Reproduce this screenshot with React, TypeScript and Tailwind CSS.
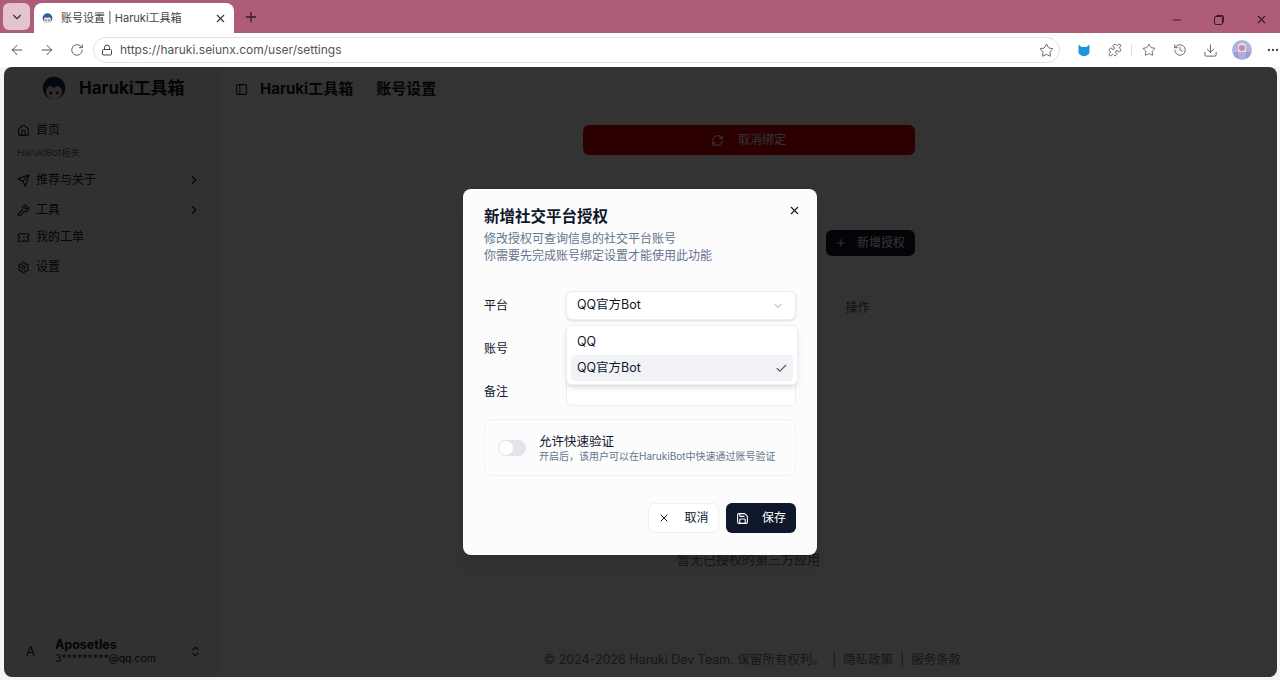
import React from "react";
import { ArrowLeft, ArrowRight, RotateCw, Lock, Star, Puzzle, History, Download, MoreHorizontal, X, Plus, Minus, ChevronDown, ChevronRight, ChevronsUpDown, Home, Send, Wrench, Ticket, Settings, PanelLeft, Check, Save, RefreshCw } from "lucide-react";

const font = "font-['Inter','Noto_Sans_CJK_SC',sans-serif]";

function Face({ size, dark }: { size: number; dark?: boolean }) {
  return (
    <svg width={size} height={size} viewBox="0 0 32 32" className="shrink-0">
      <circle cx="16" cy="15" r="12" fill={dark ? "#1b2a4a" : "#2f5f9e"} />
      <ellipse cx="16" cy="19" rx="8.5" ry="8" fill="#f3dfd6" />
      <path d="M6 16C7 7 25 7 26 16C22 12 19 12 16 15C13 12 10 12 6 16Z" fill={dark ? "#1b2a4a" : "#2f5f9e"} />
      <circle cx="12.5" cy="20" r="1.6" fill="#1b2a4a" />
      <circle cx="19.5" cy="20" r="1.6" fill="#1b2a4a" />
    </svg>
  );
}

function BrowserTop() {
  return (
    <>
      <div className="flex h-[33px] shrink-0 items-end bg-[#ae5c7a] pl-[3px]">
        <div className="mb-[3px] flex h-[27px] w-[27px] items-center justify-center rounded-md bg-[#e3c3d0]">
          <ChevronDown size={14} color="#333" />
        </div>
        <div className="ml-[4px] flex h-[30px] w-[200px] items-center rounded-t-lg bg-white pl-[7px] pr-[7px]">
          <Face size={13} />
          <span className="ml-[7px] flex-1 text-[11px] text-[#444]">账号设置 | Haruki工具箱</span>
          <X size={13} color="#333" />
        </div>
        <Plus size={16} color="#3a1b28" className="mb-[8px] ml-[9px]" />
        <div className="mb-[7px] ml-auto flex items-center">
          <Minus size={12} color="#3a1b28" className="mr-[31px]" />
          <svg width="10" height="10" viewBox="0 0 10 10" className="mr-[31px]" fill="none" stroke="#3a1b28">
            <rect x="0.5" y="1.5" width="8" height="8" rx="1.5" />
            <path d="M2.5 0.5H8A1.5 1.5 0 0 1 9.5 2V7.5" />
          </svg>
          <X size={13} color="#3a1b28" className="mr-[12px]" />
        </div>
      </div>
      <div className="flex h-[34px] shrink-0 items-center bg-white">
        <ArrowLeft size={16} color="#444" strokeWidth={1.4} className="ml-[9px]" />
        <ArrowRight size={16} color="#444" strokeWidth={1.4} className="ml-[14px]" />
        <RotateCw size={14} color="#444" strokeWidth={1.4} className="ml-[15px]" />
        <div className="ml-[9px] flex h-[26px] w-[968px] items-center rounded-full border border-[#e2e2e2] bg-white pl-[7px] pr-[5px]">
          <Lock size={12} color="#444" />
          <span className="ml-[7px] flex-1 text-[12px] text-[#555]">https://haruki.seiunx.com/user/settings</span>
          <Star size={15} color="#444" strokeWidth={1.3} />
        </div>
        <svg width="14" height="14" viewBox="0 0 14 14" className="ml-[17px]">
          <path d="M1.5 1.5L4.5 4H9.500L12.5 1.500V9C12.500 11 10 13 7 13C4 13 1.500 11 1.500 9Z" fill="#1c97dc" />
        </svg>
        <Puzzle size={14} color="#444" strokeWidth={1.3} className="ml-[17px]" />
        <div className="ml-[9px] h-[12px] w-px bg-[#ddd]" />
        <Star size={14} color="#444" strokeWidth={1.3} className="ml-[10px]" />
        <History size={14} color="#444" strokeWidth={1.3} className="ml-[17px]" />
        <Download size={15} color="#444" strokeWidth={1.3} className="ml-[16px]" />
        <div className="ml-[14px] flex h-[20px] w-[20px] items-center justify-center overflow-hidden rounded-full bg-[#aeb4dc]">
          <svg width="20" height="20" viewBox="0 0 20 20">
            <rect x="6" y="3" width="8" height="15" rx="4" fill="#e6dde8" />
            <circle cx="10" cy="8" r="3" fill="#c98aa6" />
            <rect x="2" y="12" width="16" height="6" fill="#8b8fd0" opacity="0.6" />
          </svg>
        </div>
        <MoreHorizontal size={14} color="#444" className="ml-[14px]" />
      </div>
    </>
  );
}

function NavRow({ icon, label, chevron, cls }: { icon: React.ReactNode; label: string; chevron?: boolean; cls: string }) {
  return (
    <div className={`flex items-center pl-[13px] pr-[19px] ${cls}`}>
      {icon}
      <span className="ml-[6px] flex-1 text-[12px] text-[#0f172a]">{label}</span>
      {chevron && <ChevronRight size={14} color="#0f172a" />}
    </div>
  );
}

function Sidebar() {
  return (
    <aside className="flex w-[216px] shrink-0 flex-col bg-[#f6f6f6]">
      <div className="flex h-[44px] items-center pl-[35px]">
        <Face size={30} dark />
        <span className="ml-[10px] text-[17px] font-bold text-[#0f172a]">Haruki工具箱</span>
      </div>
      <NavRow icon={<Home size={13} color="#0f172a" />} label="首页" cls="mt-[8px] h-[22px]" />
      <div className="mt-[5px] h-[14px] pl-[13px] text-[9.5px] leading-[14px] text-[#64748b]">HarukiBot相关</div>
      <NavRow icon={<Send size={13} color="#0f172a" />} label="推荐与关于" chevron cls="mt-[9px] h-[22px]" />
      <NavRow icon={<Wrench size={13} color="#0f172a" />} label="工具" chevron cls="mt-[8px] h-[22px]" />
      <NavRow icon={<Ticket size={13} color="#0f172a" />} label="我的工单" cls="mt-[5px] h-[22px]" />
      <NavRow icon={<Settings size={13} color="#0f172a" />} label="设置" cls="mt-[8px] h-[22px]" />
      <div className="mt-auto mb-[12px] flex items-center pl-[22px] pr-[18px]">
        <span className="text-[13px] text-[#0f172a]">A</span>
        <div className="ml-[20px] flex-1 leading-none">
          <div className="text-[12.5px] font-bold leading-[14px] text-[#0f172a]">Aposetles</div>
          <div className="text-[10.5px] leading-[13px] text-[#0f172a]">3*********@qq.com</div>
        </div>
        <ChevronsUpDown size={13} color="#0f172a" />
      </div>
    </aside>
  );
}

function Main() {
  return (
    <main className="flex min-w-0 flex-1 flex-col bg-white">
      <header className="flex h-[44px] shrink-0 items-center pl-[15px]">
        <PanelLeft size={13} color="#0f172a" />
        <span className="ml-[12px] text-[15px] font-bold text-[#0f172a]">Haruki工具箱</span>
        <span className="ml-[23px] text-[15px] font-bold text-[#0f172a]">账号设置</span>
      </header>
      <div className="flex flex-1 flex-col items-center">
        <div className="mt-[14px] flex h-[30px] w-[332px] items-center justify-center rounded-md bg-[#dc0000] text-[12px] text-white">
          <RefreshCw size={13} className="mr-[14px]" />
          取消绑定
        </div>
        <div className="mt-[75px] flex w-[332px] justify-end">
          <div className="flex h-[26px] w-[89px] items-center justify-center rounded-md bg-[#0f172a] text-[12px] text-white">
            <Plus size={12} className="mr-[10px]" />
            新增授权
          </div>
        </div>
        <div className="mt-[43px] w-[332px] pr-[45px] text-right text-[12px] text-[#475569]">操作</div>
        <div className="mt-[233px] text-[13px] text-[#64748b]">暂无已授权的第三方应用</div>
        <div className="mt-auto mb-[7px] pl-[8px] text-[12.5px] text-[#64748b]">© 2024-2026 Haruki Dev Team. 保留所有权利。 &nbsp;|&nbsp; 隐私政策 &nbsp;|&nbsp; 服务条款</div>
      </div>
    </main>
  );
}

function FieldRow({ label, children, cls }: { label: string; children: React.ReactNode; cls?: string }) {
  return (
    <div className={`flex items-center ${cls ?? ""}`}>
      <span className="w-[82px] text-[12px] text-[#0f172a]">{label}</span>
      {children}
    </div>
  );
}

function Modal() {
  return (
    <div className="absolute left-[459px] top-[122px] flex h-[366px] w-[354px] flex-col rounded-lg bg-[#fcfcfd] px-[21px] pt-[18px] shadow-lg">
      <X size={13} color="#0f172a" className="absolute right-[16px] top-[15px]" />
      <h2 className="text-[15.500px] font-bold leading-[20px] text-[#0f172a]">新增社交平台授权</h2>
      <p className="mt-[4px] text-[12px] leading-[16px] text-[#64748b]">修改授权可查询信息的社交平台账号</p>
      <p className="mt-px text-[12px] leading-[16px] text-[#64748b]">你需要先完成账号绑定设置才能使用此功能</p>

      <FieldRow label="平台" cls="mt-[27px]">
        <div className="flex h-[29px] flex-1 items-center justify-between rounded-md border border-[#eceef2] bg-white pl-[10px] pr-[11px] shadow-sm">
          <span className="text-[12.500px] text-[#0f172a]">QQ官方Bot</span>
          <ChevronDown size={12} color="#94a3b8" />
        </div>
      </FieldRow>
      <FieldRow label="账号" cls="mt-[14px]">
        <div className="h-[29px] flex-1 rounded-md border border-[#eceef2] bg-white" />
      </FieldRow>
      <FieldRow label="备注" cls="mt-[14px]">
        <div className="h-[29px] flex-1 rounded-md border border-[#eceef2] bg-white" />
      </FieldRow>

      <div className="mt-[13px] flex h-[57px] items-center rounded-lg border border-[#f1f2f4] pl-[13px]">
        <div className="flex h-[16px] w-[28px] items-center rounded-full bg-[#e2e4e9] pl-[1px]">
          <div className="h-[14px] w-[14px] rounded-full bg-white" />
        </div>
        <div className="ml-[13px]">
          <div className="text-[12.500px] leading-[17px] text-[#0f172a]">允许快速验证</div>
          <div className="text-[10px] leading-[13px] text-[#64748b]">开启后，该用户可以在HarukiBot中快速通过账号验证</div>
        </div>
      </div>

      <div className="mt-[27px] flex justify-end gap-[7px]">
        <div className="flex h-[30px] w-[71px] items-center justify-center rounded-md border border-[#eef0f3] bg-white text-[12px] text-[#0f172a]">
          <X size={12} className="mr-[14px]" />
          取消
        </div>
        <div className="flex h-[30px] w-[70px] items-center justify-center rounded-md bg-[#0f172a] text-[12px] text-white">
          <Save size={13} className="mr-[13px]" />
          保存
        </div>
      </div>

      <div className="absolute left-[103px] top-[136px] flex h-[60px] w-[232px] flex-col justify-center rounded-md border border-[#eef0f3] bg-white px-[4px] shadow-md">
        <div className="flex h-[26px] items-center pl-[6px] text-[12.500px] text-[#0f172a]">QQ</div>
        <div className="flex h-[26px] items-center justify-between rounded bg-[#f1f3f6] pl-[6px] pr-[5px] text-[12.500px] text-[#0f172a]">
          QQ官方Bot
          <Check size={13} color="#475569" />
        </div>
      </div>
    </div>
  );
}

export default function App() {
  return (
    <div className={`flex h-[680px] w-[1280px] flex-col overflow-hidden bg-[#f4f4f4] ${font}`}>
      <BrowserTop />
      <div className="relative mb-[3px] ml-[4px] mr-[3px] flex min-h-0 flex-1 overflow-hidden rounded-lg">
        <Sidebar />
        <Main />
        <div className="absolute inset-0 bg-black/80" />
        <Modal />
      </div>
    </div>
  );
}
